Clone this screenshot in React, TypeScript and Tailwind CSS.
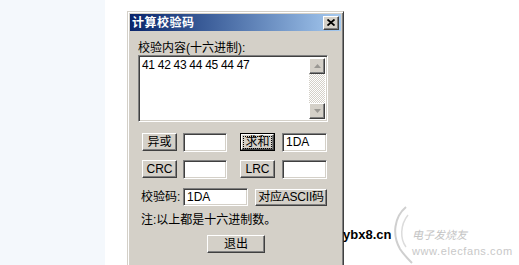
import React from "react";

const FONT = "font-['Liberation_Sans','Noto_Sans_CJK_SC',sans-serif]";

// classic 3D borders
const raised =
  "bg-[#d4d0c8] border border-t-white border-l-white border-r-[#404040] border-b-[#404040] shadow-[inset_-1px_-1px_0_#808080]";
const sunken =
  "bg-white border border-t-[#808080] border-l-[#808080] border-r-white border-b-white shadow-[inset_1px_1px_0_#404040,inset_-1px_-1px_0_#d4d0c8]";

function Button({ label, className = "" }: { label: string; className?: string }) {
  return (
    <div className={`${raised} flex items-center justify-center text-[12px] leading-none text-black ${className}`}>
      {label}
    </div>
  );
}

function TextBox({ value = "", className = "" }: { value?: string; className?: string }) {
  return (
    <div className={`${sunken} flex items-center pl-[3px] text-[12px] leading-none text-black ${className}`}>
      {value}
    </div>
  );
}

function Arrow({ up }: { up?: boolean }) {
  return (
    <div className={`${raised} w-[16px] h-[16px] flex items-center justify-center`}>
      <svg width="7" height="4" viewBox="0 0 7 4">
        {up ? (
          <polygon points="3.5,0 7,4 0,4" fill="#9a9893" />
        ) : (
          <polygon points="0,0 7,0 3.5,4" fill="#9a9893" />
        )}
      </svg>
    </div>
  );
}

export default function App() {
  return (
    <div className={`w-[519px] h-[265px] overflow-hidden bg-white flex relative ${FONT}`}>
      <div className="w-[105px] h-full bg-[#f4f8fc]" />

      {/* dialog */}
      <div className="ml-[22px] mt-[11px] w-[217px] h-[270px] bg-[#d4d0c8] border border-t-[#d4d0c8] border-l-[#d4d0c8] border-r-[#404040] border-b-[#404040] shadow-[inset_1px_1px_0_#fff,inset_-1px_-1px_0_#808080] p-[2px] flex flex-col">
        {/* title bar */}
        <div className="h-[17px] bg-gradient-to-r from-[#0a246a] to-[#a6caf0] flex items-center justify-between pl-[2px] pr-[2px]">
          <span className="text-white font-bold text-[12px] leading-none tracking-[0.5px]">计算校验码</span>
          <div className={`${raised} w-[16px] h-[14px] flex items-center justify-center`}>
            <svg width="8" height="7" viewBox="0 0 8 7">
              <path d="M0.5 0.5 L7.5 6.5 M7.5 0.5 L0.5 6.5" stroke="#000" strokeWidth="1.8" />
            </svg>
          </div>
        </div>

        <div className="mt-[10px] pl-[8px] text-[12px] leading-[14px] text-black">校验内容(十六进制):</div>

        {/* textarea with scrollbar */}
        <div className={`${sunken} ml-[8px] w-[190px] h-[67px] flex p-[2px]`}>
          <div className="flex-1 pl-[1px] pt-[1px] text-[12px] leading-[13px] tracking-[-0.3px] text-black">
            41 42 43 44 45 44 47
          </div>
          <div className="w-[16px] flex flex-col">
            <Arrow up />
            <div className="flex-1 bg-[repeating-conic-gradient(#ffffff_0_25%,#d4d0c8_0_50%)] bg-[length:2px_2px]" />
            <Arrow />
          </div>
        </div>

        {/* row 1 */}
        <div className="mt-[11px] ml-[12px] flex items-center h-[18px]">
          <Button label="异或" className="w-[35px] h-[18px]" />
          <TextBox className="ml-[6px] w-[44px] h-[19px]" />
          <div className="ml-[13px] w-[35px] h-[18px] border border-black">
            <div className={`${raised} w-full h-full flex items-center justify-center`}>
              <span className="outline outline-1 outline-dotted outline-black px-[1px] text-[12px] leading-[11px] text-black">
                求和
              </span>
            </div>
          </div>
          <TextBox value="1DA" className="ml-[7px] w-[45px] h-[19px]" />
        </div>

        {/* row 2 */}
        <div className="mt-[9px] ml-[12px] flex items-center h-[18px]">
          <Button label="CRC" className="w-[35px] h-[18px] text-[11px]" />
          <TextBox className="ml-[6px] w-[44px] h-[19px]" />
          <Button label="LRC" className="ml-[13px] w-[35px] h-[18px] text-[11px]" />
          <TextBox className="ml-[7px] w-[45px] h-[19px]" />
        </div>

        {/* row 3 */}
        <div className="mt-[10px] ml-[11px] flex items-center h-[18px]">
          <span className="w-[42px] text-[12px] leading-none text-black">校验码:</span>
          <TextBox value="1DA" className="w-[65px] h-[18px]" />
          <Button label="对应ASCII码" className="ml-[7px] w-[72px] h-[17px] text-[11px] tracking-[-0.2px]" />
        </div>

        <div className="mt-[7px] ml-[11px] text-[12px] leading-[14px] text-black">注:以上都是十六进制数。</div>

        <Button label="退出" className="mt-[8px] ml-[77px] w-[58px] h-[18px]" />
      </div>

      {/* watermark */}
      <div className="absolute left-[343px] top-[228px] text-[13px] font-bold leading-none text-black font-['Liberation_Sans',sans-serif]">
        ybx8.cn
      </div>
      <svg className="absolute left-[392px] top-[205px]" width="22" height="60" viewBox="0 0 22 60">
        <path d="M14 2 C2 12 0 30 8 44 C12 50 16 54 20 58" stroke="#cfcfcf" strokeWidth="2" fill="none" />
        <path d="M16 10 C8 20 8 34 14 42" stroke="#dcdcdc" strokeWidth="1.5" fill="none" />
      </svg>
      <div className="absolute left-[412px] top-[229px] text-[11px] italic leading-none text-[#c4c4c4] font-['Noto_Sans_CJK_SC',sans-serif]">
        电子发烧友
      </div>
      <div className="absolute left-[412px] top-[246px] text-[11px] leading-none text-[#c8c8c8] tracking-[0.6px] font-['Liberation_Sans',sans-serif]">
        www.elecfans.com
      </div>
    </div>
  );
}
